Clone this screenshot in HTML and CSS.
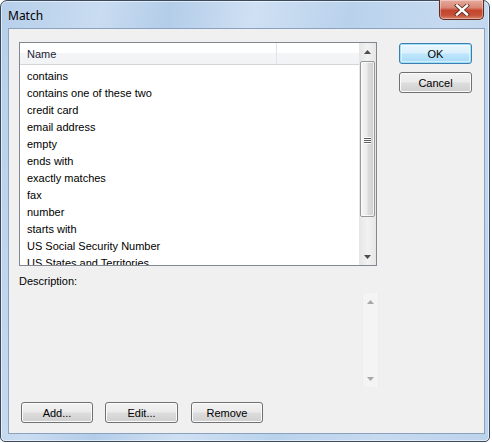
FILE: index.html
```html
<!DOCTYPE html>
<html>
<head>
<meta charset="utf-8">
<link rel="stylesheet" href="styles.css">
</head>
<body>
<div class="window">
  <div class="titlebar">
    <span class="title">Match</span>
    <div class="close">
      <svg width="16" height="12" viewBox="0 0 16 12"><path d="M3 1.5 L13 10.5 M13 1.5 L3 10.5" stroke="#5a2a20" stroke-width="4" stroke-linecap="square" fill="none"/><path d="M3 1.5 L13 10.5 M13 1.5 L3 10.5" stroke="#fff" stroke-width="2.4" stroke-linecap="square" fill="none"/></svg>
    </div>
  </div>
  <div class="client">
    <div class="left">
      <div class="listbox">
        <div class="list-content">
          <div class="header">
            <div class="hcol name">Name</div>
            <div class="hcol rest"></div>
          </div>
          <div class="rows">
            <div class="row">contains</div>
            <div class="row">contains one of these two</div>
            <div class="row">credit card</div>
            <div class="row">email address</div>
            <div class="row">empty</div>
            <div class="row">ends with</div>
            <div class="row">exactly matches</div>
            <div class="row">fax</div>
            <div class="row">number</div>
            <div class="row">starts with</div>
            <div class="row">US Social Security Number</div>
            <div class="row">US States and Territories</div>
          </div>
        </div>
        <div class="vscroll">
          <div class="arrow"><svg width="7" height="4" viewBox="0 0 7 4"><path d="M0 4 L3.5 0 L7 4 Z" fill="#4d4d4d"/></svg></div>
          <div class="track">
            <div class="thumb"><div class="grip"></div></div>
          </div>
          <div class="arrow"><svg width="7" height="4" viewBox="0 0 7 4"><path d="M0 0 L7 0 L3.5 4 Z" fill="#4d4d4d"/></svg></div>
        </div>
      </div>
      <div class="desc-label">Description:</div>
      <div class="desc">
        <div class="desc-text"></div>
        <div class="vscroll disabled">
          <div class="arrow"><svg width="7" height="4" viewBox="0 0 7 4"><path d="M0 4 L3.5 0 L7 4 Z" fill="#a8a8a8"/></svg></div>
          <div class="track"></div>
          <div class="arrow"><svg width="7" height="4" viewBox="0 0 7 4"><path d="M0 0 L7 0 L3.5 4 Z" fill="#a8a8a8"/></svg></div>
        </div>
      </div>
      <div class="bottom-buttons">
        <button class="btn">Add...</button>
        <button class="btn">Edit...</button>
        <button class="btn">Remove</button>
      </div>
    </div>
    <div class="right">
      <button class="btn default">OK</button>
      <button class="btn">Cancel</button>
    </div>
  </div>
</div>
</body>
</html>
```
FILE: styles.css
```css
html, body {
  margin: 0;
  padding: 0;
  background: #ffffff;
}
body {
  width: 492px;
  height: 443px;
  overflow: hidden;
  font-family: "Liberation Sans", Arial, sans-serif;
  font-size: 11px;
  color: #000;
}
.window {
  box-sizing: border-box;
  width: 490px;
  height: 442px;
  border: 1px solid #3b4a5c;
  border-radius: 7px 7px 5px 5px;
  background: linear-gradient(100deg, #b6cfea 0%, #c9dcf1 18%, #b3cde9 30%, #cfe0f3 45%, #b9d2ec 62%, #c6daf0 80%, #bcd3ec 100%);
  box-shadow: inset 0 0 0 1px rgba(255,255,255,0.55);
  padding: 0 4px 0 7px;
  display: flex;
  flex-direction: column;
}
.titlebar {
  height: 27px;
  display: flex;
  justify-content: space-between;
  align-items: flex-start;
}
.title {
  font-family: "Noto Sans", "Liberation Sans", sans-serif;
  font-size: 12px;
  line-height: 12px;
  margin-top: 9px;
  color: #000;
}
.close {
  box-sizing: border-box;
  width: 45px;
  height: 20px;
  margin-top: -1px;
  margin-right: 1px;
  border: 1px solid #5e2a22;
  border-top: none;
  border-radius: 0 0 5px 5px;
  background: linear-gradient(#e6aa9d 0%, #d98775 40%, #c4452e 55%, #c65138 80%, #d9826d 100%);
  box-shadow: inset 0 0 0 1px rgba(255,255,255,0.35);
  display: flex;
  align-items: center;
  justify-content: center;
}
.client {
  box-sizing: border-box;
  width: 477px;
  height: 406px;
  border: 1px solid #8aa2be;
  background: #f0f0f0;
  padding: 13px 10px 0 10px;
  display: grid;
  grid-template-columns: 358px 73px;
  column-gap: 22px;
  align-items: start;
}
.left {
  display: flex;
  flex-direction: column;
}
.listbox {
  box-sizing: border-box;
  height: 224px;
  border: 1px solid #828790;
  background: #fff;
  display: flex;
  overflow: hidden;
}
.list-content {
  flex: 1;
  overflow: hidden;
}
.header {
  box-sizing: border-box;
  height: 22px;
  display: flex;
  border-bottom: 1px solid #d5d5d5;
  background: linear-gradient(#ffffff 0%, #ffffff 45%, #f4f5f7 50%, #f2f3f5 100%);
}
.hcol {
  box-sizing: border-box;
  line-height: 21px;
  padding-top: 1px;
  padding-left: 7px;
  color: #1c2636;
}
.hcol.name {
  width: 257px;
  border-right: 1px solid #e2e3ea;
}
.hcol.rest {
  flex: 1;
}
.rows {
  padding-top: 3px;
  padding-left: 7px;
}
.row {
  height: 17px;
  line-height: 17px;
  white-space: nowrap;
}
.vscroll {
  width: 17px;
  display: flex;
  flex-direction: column;
  background: #eaeaea;
  background-image: linear-gradient(90deg, #e6e6e6, #f2f2f2 50%, #e6e6e6);
}
.arrow {
  height: 17px;
  flex: none;
  display: flex;
  align-items: center;
  justify-content: center;
}
.track {
  flex: 1;
  padding: 1px 0;
}
.thumb {
  box-sizing: border-box;
  height: 156px;
  margin: 0 1px;
  border: 1px solid #979797;
  border-radius: 2px;
  background: linear-gradient(90deg, #f5f5f5 0%, #ececec 45%, #dcdcdc 55%, #cfcfcf 100%);
  box-shadow: inset 0 0 0 1px rgba(255,255,255,0.7);
  display: flex;
  align-items: center;
  justify-content: center;
}
.grip {
  width: 7px;
  height: 7px;
  margin-top: 2px;
  background: repeating-linear-gradient(#ffffff 0, #ffffff 1px, #5c5c5c 1px, #5c5c5c 2px);
}
.desc-label {
  margin-top: 9px;
  line-height: 13px;
  height: 13px;
}
.desc {
  box-sizing: border-box;
  width: 363px;
  height: 100px;
  margin-top: 2px;
  padding: 3px;
  display: flex;
}
.desc-text {
  flex: 1;
}
.vscroll.disabled {
  background: #f4f4f4;
  background-image: none;
  box-shadow: inset 1px 0 0 #ececec, inset -1px 0 0 #ececec;
}
.bottom-buttons {
  display: flex;
  gap: 12px;
  margin-top: 12px;
  padding-left: 2px;
}
.btn {
  box-sizing: border-box;
  width: 72px;
  height: 21px;
  padding: 0;
  border: 1px solid #707070;
  border-radius: 3px;
  background: linear-gradient(#f2f2f2 0%, #ebebeb 48%, #dddddd 52%, #cfcfcf 100%);
  box-shadow: inset 0 0 0 1px #fbfbfb;
  font-family: "Liberation Sans", Arial, sans-serif;
  font-size: 11px;
  color: #000;
  text-align: center;
}
.bottom-buttons .btn:nth-child(2) {
  width: 73px;
}
.bottom-buttons .btn:nth-child(3) {
  margin-left: 1px;
}
.right {
  display: flex;
  flex-direction: column;
  gap: 8px;
  padding-top: 1px;
}
.right .btn {
  width: 73px;
}
.btn.default {
  border-color: #3c7fb1;
  background: linear-gradient(#eaf6fd 0%, #d9f0fc 48%, #bee6fd 52%, #a7d9f5 100%);
  box-shadow: inset 0 0 0 1px #9fe0f8, inset 0 0 0 2px rgba(255,255,255,0.5);
}
```
